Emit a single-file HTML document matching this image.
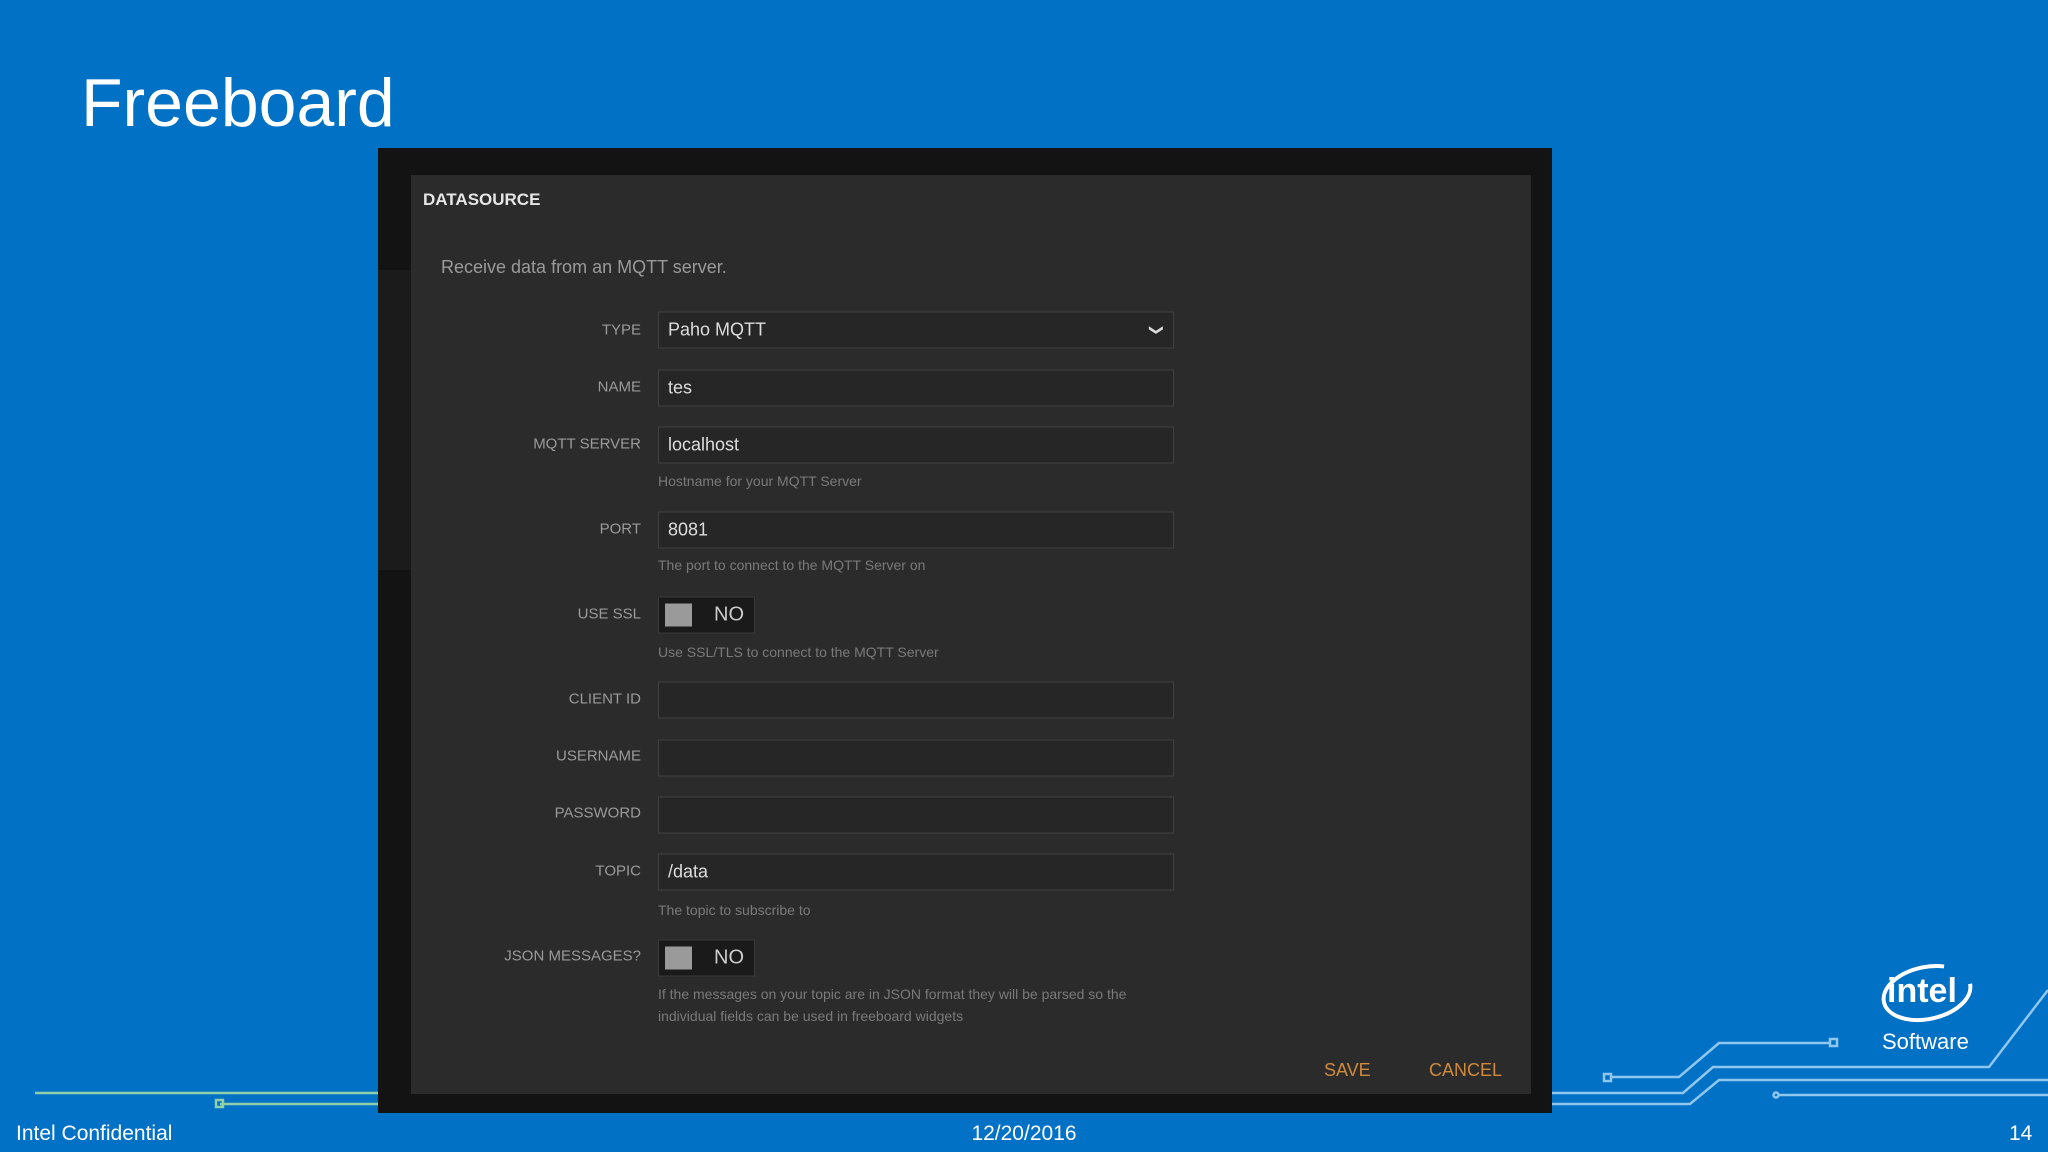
<!DOCTYPE html>
<html><head><style>
*{margin:0;padding:0;box-sizing:border-box}
body{width:2048px;height:1152px;background:#0071c5;position:relative;overflow:hidden;font-family:"Liberation Sans",sans-serif}
.a{position:absolute}
.lab{position:absolute;right:1407px;color:#9a9a9a;font-size:15px;text-align:right;white-space:nowrap;transform:translateY(-50%)}
.inp{position:absolute;left:658px;width:516px;height:37px;background:#262626;border:1px solid #404040;color:#ddd;font-size:18px;padding-left:9px;line-height:35px;transform:translateY(-50%)}
.hint{position:absolute;left:658px;color:#7a7a7a;font-size:14px;transform:translateY(-50%);line-height:22px}
.tog{position:absolute;left:658px;width:97px;height:37px;background:#1a1a1a;border:1px solid #3a3a3a;transform:translateY(-50%)}
.tog i{position:absolute;left:6px;top:6px;width:27px;height:23px;background:#9a9a9a}
.tog b{position:absolute;left:55px;top:6px;font-weight:normal;color:#ccc;font-size:20px}
</style></head><body>
<div class="a" style="left:81px;top:64px;color:#fff;font-size:68px;">Freeboard</div>
<svg class="a" style="left:0;top:0" width="2048" height="1152">
<g fill="none" stroke="#8fc7ee" stroke-width="2.5">
<path d="M35 1093H378" stroke="#8fd0a8"/>
<path d="M220 1104H378" stroke="#8fd0a8"/>
<rect x="216" y="1100" width="7" height="7" stroke="#8fd0a8"/>
<path d="M1552 1093H1683L1713 1067H1989L2048 990"/>
<path d="M1552 1104H1690L1719 1080H2048"/>
<rect x="1604" y="1074" width="7" height="7"/>
<path d="M1611 1077H1679L1719 1043H1830"/>
<rect x="1830" y="1039" width="7" height="7"/>
<path d="M1779 1095H2048"/>
<circle cx="1776" cy="1095" r="2.5"/>
<ellipse cx="1927" cy="993" rx="44" ry="26" stroke="#fff" stroke-width="4" transform="rotate(-12 1927 993)" stroke-dasharray="190 60"/>
</g>
<text x="1887" y="1002" fill="#fff" font-family="Liberation Sans" font-size="34" font-weight="bold">intel</text>
<text x="1882" y="1049" fill="#fff" font-family="Liberation Sans" font-size="22">Software</text>
</svg>
<div class="a" style="left:378px;top:148px;width:1174px;height:965px;background:#131313"></div>
<div class="a" style="left:378px;top:270px;width:33px;height:300px;background:#1b1b1b"></div>
<div class="a" style="left:411px;top:175px;width:1120px;height:919px;background:#2b2b2b"></div>
<div class="a" style="left:423px;top:190px;color:#e6e6e6;font-size:17px;font-weight:bold">DATASOURCE</div>
<div class="a" style="left:441px;top:257px;color:#9a9a9a;font-size:18px">Receive data from an MQTT server.</div>

<div class="lab" style="top:330px">TYPE</div><div class="inp" style="top:330px">Paho MQTT<span style="position:absolute;right:12px;font-size:14px">&#10094;</span></div>
<div class="lab" style="top:387px">NAME</div><div class="inp" style="top:388px">tes</div>
<div class="lab" style="top:444px">MQTT SERVER</div><div class="inp" style="top:445px">localhost</div>
<div class="hint" style="top:481px">Hostname for your MQTT Server</div>
<div class="lab" style="top:529px">PORT</div><div class="inp" style="top:530px">8081</div>
<div class="hint" style="top:565px">The port to connect to the MQTT Server on</div>
<div class="lab" style="top:614px">USE SSL</div><div class="tog" style="top:615px"><i></i><b>NO</b></div>
<div class="hint" style="top:652px">Use SSL/TLS to connect to the MQTT Server</div>
<div class="lab" style="top:699px">CLIENT ID</div><div class="inp" style="top:700px"></div>
<div class="lab" style="top:756px">USERNAME</div><div class="inp" style="top:758px"></div>
<div class="lab" style="top:813px">PASSWORD</div><div class="inp" style="top:815px"></div>
<div class="lab" style="top:871px">TOPIC</div><div class="inp" style="top:872px">/data</div>
<div class="hint" style="top:910px">The topic to subscribe to</div>
<div class="lab" style="top:956px">JSON MESSAGES?</div><div class="tog" style="top:958px"><i></i><b>NO</b></div>
<div class="hint" style="top:1005px">If the messages on your topic are in JSON format they will be parsed so the<br>individual fields can be used in freeboard widgets</div>
<div class="a" style="left:1324px;top:1060px;color:#d08a3c;font-size:18px">SAVE</div>
<div class="a" style="left:1429px;top:1060px;color:#d08a3c;font-size:18px">CANCEL</div>
<style>.lab+.inp span{transform:rotate(-90deg);display:inline-block}</style>

<div class="a" style="left:16px;top:1122px;color:#fff;font-size:21px">Intel Confidential</div>
<div class="a" style="left:0;width:2048px;text-align:center;top:1122px;color:#fff;font-size:21px">12/20/2016</div>
<div class="a" style="left:2009px;top:1122px;color:#fff;font-size:21px">14</div>
</body></html>
